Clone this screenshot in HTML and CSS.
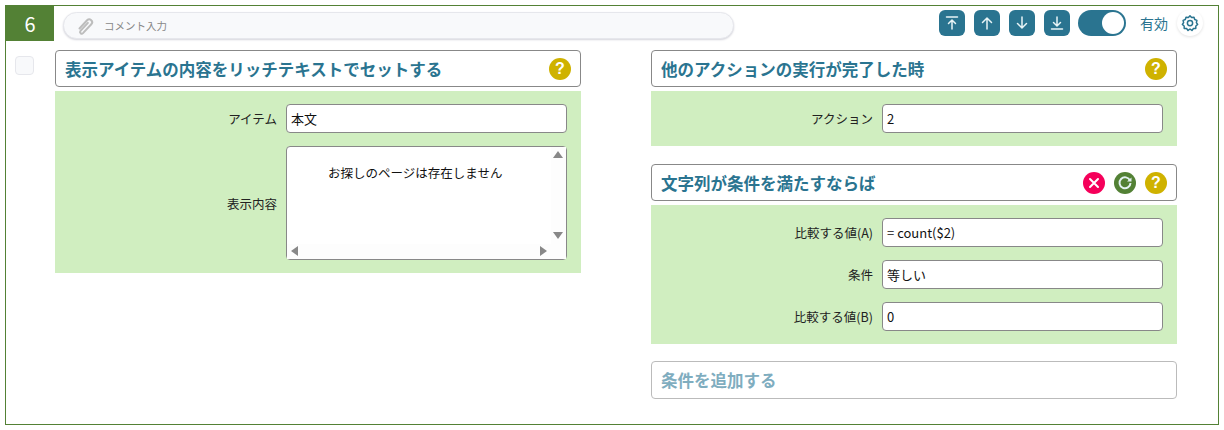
FILE: index.html
```html
<!DOCTYPE html>
<html>
<head>
    <title>アクション</title>
    <link rel="stylesheet" href="styles.css">
</head>
<body>
    <div class="card">
        <div class="topbar">
            <div class="num">6</div>
            <div class="comment">
                <svg class="clip" width="20" height="20" viewBox="0 0 20 20"><path d="M4.5 12.5l7.6-8.2a2.9 2.9 0 0 1 4.2 4l-8.3 8.8a1.7 1.7 0 0 1-2.5-2.3l7.4-7.9" fill="none" stroke="#bdbdbd" stroke-width="2" stroke-linecap="round"/></svg>
                <span>コメント入力</span>
            </div>
            <div class="tools">
                <button class="sq"><svg width="16" height="16" viewBox="0 0 16 16"><path d="M2.5 2h11M8 14V5M4.5 8.5L8 5l3.5 3.5" class="ic"/></svg></button>
                <button class="sq"><svg width="16" height="16" viewBox="0 0 16 16"><path d="M8 14V3M3.5 7.5L8 3l4.500 4.500" class="ic"/></svg></button>
                <button class="sq"><svg width="16" height="16" viewBox="0 0 16 16"><path d="M8 2v11M3.500 8.500L8 13l4.500-4.500" class="ic"/></svg></button>
                <button class="sq"><svg width="16" height="16" viewBox="0 0 16 16"><path d="M2.500 14h11M8 2v9M4.500 7.500L8 11l3.500-3.500" class="ic"/></svg></button>
                <div class="toggle"><i></i></div>
                <span class="state">有効</span>
                <div class="gear">
                    <svg width="18" height="18" viewBox="0 0 24 24"><path d="M12 2.500l2.200 2.300 3.100-.5 1 3 2.900 1.200-.7 3 1.700 2.500-2.400 2-.1 3.200-3.100.2-2 2.500L12 20l-2.600 1.900-2-2.500-3.100-.2-.1-3.200-2.400-2 1.700-2.500-.7-3 2.900-1.200 1-3 3.100.5z" fill="none" stroke="#2a7490" stroke-width="2" stroke-linejoin="round"/><circle cx="12" cy="12" r="3.500" fill="none" stroke="#2a7490" stroke-width="2"/></svg>
                </div>
            </div>
        </div>

        <div class="main">
            <div class="check"></div>
            <div class="col left">
                <div class="title">
                    <span>表示アイテムの内容をリッチテキストでセットする</span>
                    <div class="btns"><span class="round help">?</span></div>
                </div>
                <div class="form">
                    <div class="row">
                        <label>アイテム</label>
                        <div class="field">本文</div>
                    </div>
                    <div class="row">
                        <label>表示内容</label>
                        <div class="field rich">
                            <div class="rich-text">お探しのページは存在しません</div>
                            <div class="sb-v"><b class="up"></b><b class="down"></b></div>
                            <div class="sb-h"><b class="lt"></b><b class="rt"></b></div>
                        </div>
                    </div>
                </div>
            </div>
            <div class="col right">
                <div class="title">
                    <span>他のアクションの実行が完了した時</span>
                    <div class="btns"><span class="round help">?</span></div>
                </div>
                <div class="form">
                    <div class="row">
                        <label>アクション</label>
                        <div class="field">2</div>
                    </div>
                </div>

                <div class="title second">
                    <span>文字列が条件を満たすならば</span>
                    <div class="btns">
                        <span class="round del"><svg width="12" height="12" viewBox="0 0 12 12"><path d="M2 2l8 8M10 2l-8 8" stroke="#fff" stroke-width="2" stroke-linecap="round"/></svg></span>
                        <span class="round redo"><svg width="16" height="16" viewBox="0 0 16 16"><path d="M13 5.500A5.500 5.500 0 1 0 13.500 8" fill="none" stroke="#e4f2f4" stroke-width="2"/><path d="M10 6.500h4.500V2.500z" fill="#e4f2f4"/></svg></span>
                        <span class="round help">?</span>
                    </div>
                </div>
                <div class="form">
                    <div class="row">
                        <label>比較する値(A)</label>
                        <div class="field">= count($2)</div>
                    </div>
                    <div class="row">
                        <label>条件</label>
                        <div class="field">等しい</div>
                    </div>
                    <div class="row">
                        <label>比較する値(B)</label>
                        <div class="field">0</div>
                    </div>
                </div>

                <div class="title add"><span>条件を追加する</span></div>
            </div>
        </div>
    </div>
</body>
</html>
```

FILE: styles.css
```css
body {
    margin: 5px;
    font-family: "Noto Sans CJK JP", "Noto Sans", sans-serif;
    font-size: 13px;
    color: #222;
    background: #fff;
}
.card {
    width: 1214px;
    height: 420px;
    box-sizing: border-box;
    border: 1px solid #538135;
}
.topbar {
    display: flex;
    align-items: flex-start;
    height: 35px;
}
.num {
    width: 48px;
    height: 35px;
    background: #538135;
    color: #fff;
    font-size: 20px;
    line-height: 35px;
    text-align: center;
}
.comment {
    display: flex;
    align-items: center;
    width: 671px;
    height: 27px;
    margin: 6px 0 0 9px;
    box-sizing: border-box;
    padding-left: 11px;
    background: #f8f9fb;
    border: 1px solid #e6e7ec;
    border-radius: 14px;
    box-shadow: 0 1px 2px #d5d5dc;
    font-size: 10.500px;
    color: #888;
}
.clip { margin-right: 9px; }
.tools {
    display: flex;
    align-items: center;
    margin: 4px 0 0 auto;
    padding-right: 15px;
}
.sq {
    width: 26px;
    height: 26px;
    padding: 0;
    margin-right: 9px;
    border: none;
    border-radius: 6px;
    background: #2a7490;
    display: flex;
    align-items: center;
    justify-content: center;
}
.ic {
    fill: none;
    stroke: #e8f4f6;
    stroke-width: 1.500;
    stroke-linecap: round;
}
.toggle {
    width: 48px;
    height: 26px;
    border-radius: 13px;
    background: #2a7490;
    display: flex;
    justify-content: flex-end;
    align-items: center;
    padding-right: 2px;
    box-sizing: border-box;
    margin-left: -1px;
}
.toggle i {
    width: 22px;
    height: 22px;
    border-radius: 50%;
    background: #fff;
}
.state {
    margin-left: 14px;
    color: #2a7490;
    font-size: 14px;
}
.gear {
    width: 26px;
    height: 26px;
    margin-left: 9px;
    border-radius: 50%;
    background: #fff;
    box-shadow: 0 1px 3px #e2e2e2;
    display: flex;
    align-items: center;
    justify-content: center;
}
.main {
    display: flex;
    align-items: flex-start;
    padding: 9px 0 0 9px;
}
.check {
    width: 17px;
    height: 17px;
    margin-top: 6px;
    background: #f8f9fb;
    border: 1px solid #e6e7ec;
    border-radius: 4px;
}
.col { width: 526px; }
.left { margin-left: 21px; }
.right { margin-left: 70px; }
.title {
    display: flex;
    align-items: center;
    justify-content: space-between;
    height: 37px;
    box-sizing: border-box;
    padding: 0 9px;
    background: #fff;
    border: 1px solid #888;
    border-radius: 4px;
    color: #2a7490;
    font-size: 16.500px;
    font-weight: 700;
}
.second { margin-top: 18px; }
.add {
    margin-top: 17px;
    height: 38px;
    border-color: #bbb;
    color: #7fadbf;
}
.btns {
    display: flex;
    gap: 9px;
    margin-right: 0;
}
.round {
    width: 22px;
    height: 22px;
    border-radius: 50%;
    color: #fff;
    display: flex;
    align-items: center;
    justify-content: center;
}
.help {
    background: #cfb200;
    font-family: "Liberation Sans", sans-serif;
    font-size: 16px;
    font-weight: 700;
}
.del { background: #f5005a; }
.redo { background: #538135; }
.form {
    margin-top: 4px;
    padding: 13px 13px 13px 0;
    background: #d0eec0;
    display: flex;
    flex-direction: column;
    gap: 13px;
}
.row {
    display: flex;
    align-items: center;
}
.row label {
    width: 222px;
    text-align: right;
    margin-right: 9px;
    font-size: 12.500px;
}
.field {
    width: 281px;
    height: 29px;
    box-sizing: border-box;
    padding: 0 4px;
    line-height: 27px;
    background: #fff;
    border: 1px solid #888;
    border-radius: 4px;
    color: #111;
}
.rich {
    position: relative;
    height: 114px;
    padding: 0;
}
.rich-text {
    margin: 11px 0 0 41px;
    line-height: 30px;
    font-size: 12.500px;
}
.sb-v, .sb-h {
    position: absolute;
    background: #fdfdfd;
}
.sb-v { top: 0; right: 0; width: 15px; bottom: 0; }
.sb-h { left: 0; right: 15px; bottom: 0; height: 15px; }
.sb-v b, .sb-h b {
    position: absolute;
    width: 0;
    height: 0;
    border-style: solid;
    border-color: transparent;
}
.up { top: 4px; left: 2px; border-width: 0 5px 7px; border-bottom-color: #888 !important; }
.down { bottom: 20px; left: 2px; border-width: 7px 5px 0; border-top-color: #888 !important; }
.lt { left: 4px; top: 2px; border-width: 5px 7px 5px 0; border-right-color: #888 !important; }
.rt { right: 4px; top: 2px; border-width: 5px 0 5px 7px; border-left-color: #888 !important; }
```
